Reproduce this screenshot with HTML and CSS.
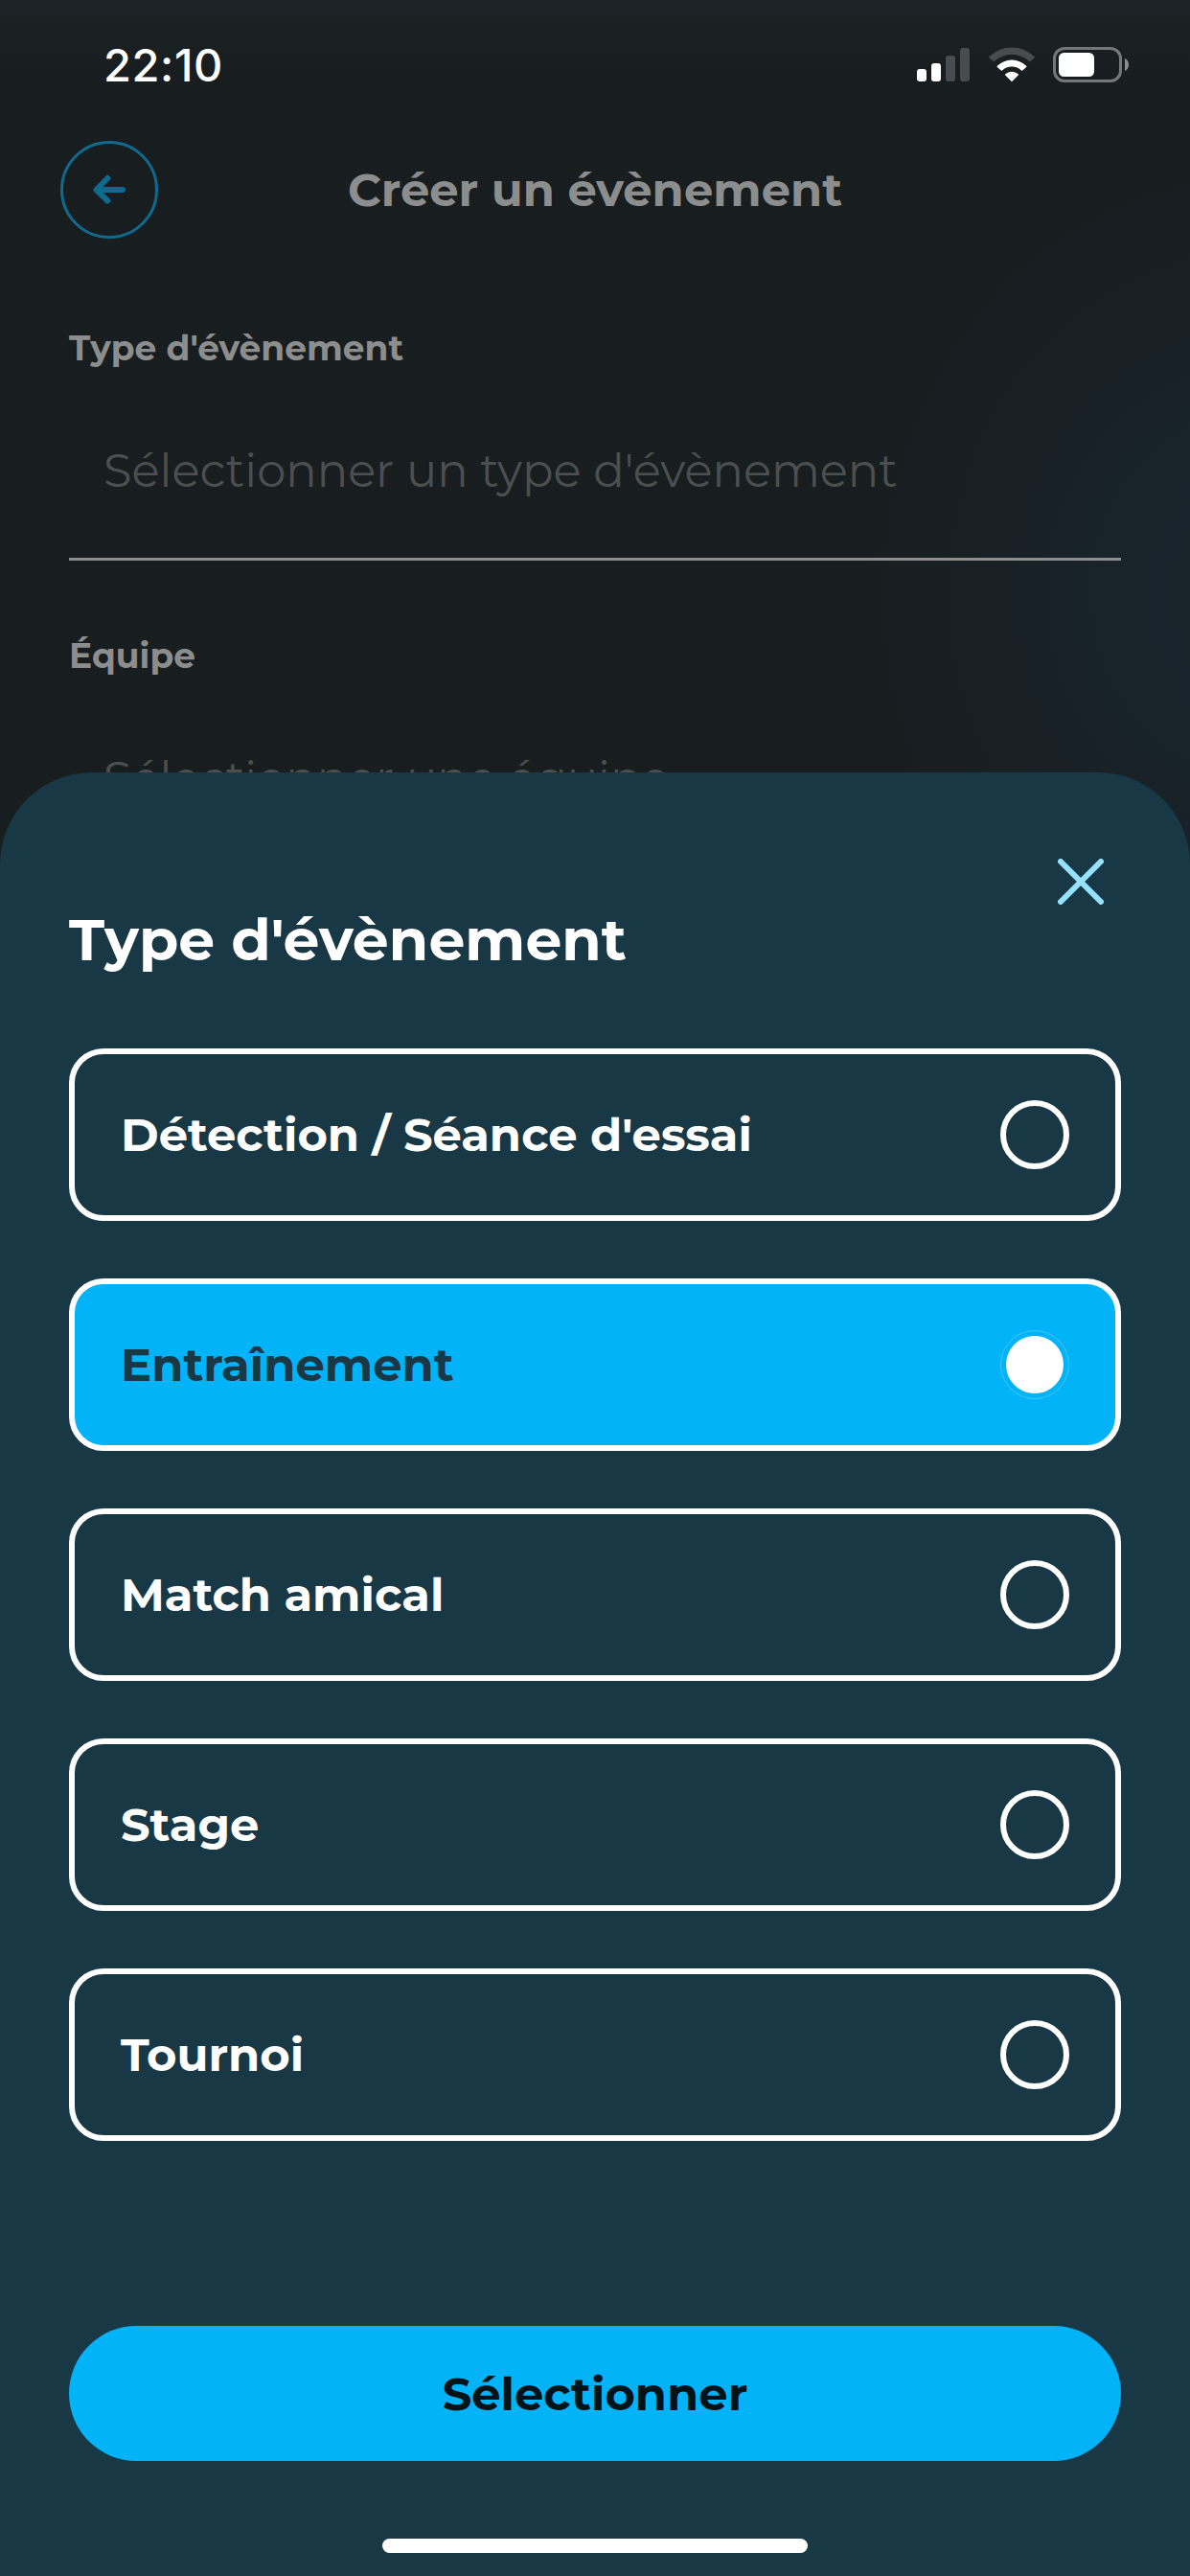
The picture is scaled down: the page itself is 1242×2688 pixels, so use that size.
FILE: index.html
```html
<!DOCTYPE html>
<html lang="fr">
<head>
<meta charset="utf-8">
<title>Créer un évènement</title>
<link rel="stylesheet" href="styles.css">
</head>
<body>
<div class="screen">
  <header class="status">
    <span class="clock">22:10</span>
    <div class="indicators">
      <svg class="signal" width="55" height="36" viewBox="0 0 55 36" fill="#fff">
        <rect x="0" y="22" width="10" height="13" rx="3"/>
        <rect x="15" y="16" width="10" height="19" rx="3"/>
        <rect x="30" y="8" width="10" height="27" rx="3" fill="#484c4e"/>
        <rect x="45" y="0" width="10" height="35" rx="3" fill="#484c4e"/>
      </svg>
      <svg class="wifi" width="48" height="37" viewBox="0 0 48 37">
        <path d="M.6 11.4A.8.8 0 0 1 .6 10.100A33.600 33.600 0 0 1 47.400 10.100A.8.8 0 0 1 47.400 11.400L43.300 15.100A.8.8 0 0 1 42.200 15.100A26.400 26.400 0 0 0 5.800 15.100A.8.8 0 0 1 4.700 15.100Z" fill="#484c4e"/>
        <path d="M8.800 19.800A21.700 21.700 0 0 1 39.200 19.800A.9.9 0 0 1 39.200 21L35.200 24.600A.9.9 0 0 1 34 24.600A14.500 14.500 0 0 0 14 24.600A.9.9 0 0 1 12.800 24.600L8.800 21A.9.9 0 0 1 8.800 19.800Z" fill="#fff"/>
        <path d="M17.300 28.300A10 10 0 0 1 30.700 28.300A.9.9 0 0 1 30.700 29.500L24.600 35.700A.9.9 0 0 1 23.400 35.700L17.300 29.500A.9.9 0 0 1 17.300 28.300Z" fill="#fff"/>
      </svg>
      <svg class="battery" width="80" height="37" viewBox="0 0 80 37">
        <rect x="1.500" y="1.500" width="69" height="34" rx="10.500" fill="none" stroke="#75787a" stroke-width="3"/>
        <rect x="6" y="6" width="37" height="25" rx="5.500" fill="#fff"/>
        <path d="M75 12C80.300 14 80.300 23 75 25Z" fill="#8b8e8f"/>
      </svg>
    </div>
  </header>

  <nav class="topbar">
    <button class="back" aria-label="Retour">
      <svg width="34" height="32" viewBox="0 0 34 32" fill="none" stroke="#0f6a8e" stroke-width="6" stroke-linecap="round" stroke-linejoin="round">
        <path d="M15.300 4L3.500 16L15.300 27.500M4 16H31"/>
      </svg>
    </button>
    <h1 class="page-title">Créer un évènement</h1>
  </nav>

  <main class="form">
    <div class="group">
      <div class="label">Type d'évènement</div>
      <div class="field">Sélectionner un type d'évènement</div>
    </div>
    <div class="group">
      <div class="label">Équipe</div>
      <div class="field">Sélectionner une équipe</div>
    </div>
  </main>

  <section class="sheet">
    <button class="close" aria-label="Fermer">
      <svg width="48" height="48" viewBox="0 0 48 48" fill="none" stroke="#98e1fd" stroke-width="6" stroke-linecap="round">
        <path d="M3 3L45 45M45 3L3 45"/>
      </svg>
    </button>
    <h2 class="sheet-title">Type d'évènement</h2>
    <div class="options">
      <div class="option"><span>Détection / Séance d'essai</span><i class="radio"></i></div>
      <div class="option selected"><span>Entraînement</span><i class="radio"></i></div>
      <div class="option"><span>Match amical</span><i class="radio"></i></div>
      <div class="option"><span>Stage</span><i class="radio"></i></div>
      <div class="option"><span>Tournoi</span><i class="radio"></i></div>
    </div>
    <button class="submit">Sélectionner</button>
    <div class="home"></div>
  </section>
</div>
</body>
</html>
```

FILE: styles.css
```css
* { box-sizing: border-box; margin: 0; padding: 0; }

body { background: #181d1f; }

button { border: 0; background: none; font: inherit; }

svg { display: block; }

.screen {
  position: relative;
  width: 1242px;
  height: 2688px;
  overflow: hidden;
  font-family: Montserrat, Inter, "Open Sans", sans-serif;
  background:
    radial-gradient(ellipse 420px 480px at 1300px 620px, #16252b 0%, #18232a 35%, rgba(24, 29, 31, 0) 100%),
    linear-gradient(180deg, #1d2326 0, #181d1f 80px);
  background-color: #181d1f;
}

.status {
  display: flex;
  justify-content: space-between;
  height: 147px;
  padding: 49px 63px 0 108px;
}

.clock {
  height: 38px;
  font: 550 47px/38px Inter, "Liberation Sans", sans-serif;
  letter-spacing: 0.6px;
  color: #fff;
}

.indicators { display: flex; height: 37px; }
.signal { margin-top: 1px; }
.wifi { margin-left: 20px; }
.battery { margin-left: 19px; }

.topbar {
  display: grid;
  grid-template-columns: 102px 1fr 102px;
  align-items: center;
  height: 102px;
  padding: 0 63px;
}

.back {
  display: flex;
  align-items: center;
  justify-content: center;
  width: 102px;
  height: 102px;
  border: 3px solid #0f6a8e;
  border-radius: 50%;
}

.page-title {
  font-size: 48px;
  font-weight: 700;
  line-height: 58px;
  text-align: center;
  color: #8c8d8d;
}

.form {
  display: flex;
  flex-direction: column;
  gap: 77px;
  padding: 92px 72px 0;
}

.label {
  font-size: 36px;
  font-weight: 700;
  line-height: 44px;
  color: #8c8d8d;
}

.field {
  height: 200px;
  padding: 77px 36px 0;
  border-bottom: 3px solid #8c8d8c;
  font-size: 48px;
  font-weight: 400;
  line-height: 58px;
  color: #4c4f50;
}

/* Bottom sheet laid over the form */
.sheet {
  position: absolute;
  inset: 806px 0 0;
  display: flex;
  flex-direction: column;
  padding: 90px 72px 0;
  border-radius: 96px 96px 0 0;
  background: #193845;
}

.close { align-self: flex-end; margin-right: 18px; height: 48px; }

.sheet-title {
  font-size: 60px;
  font-weight: 700;
  line-height: 73px;
  color: #fff;
}

.options {
  display: flex;
  flex-direction: column;
  gap: 60px;
  margin-top: 77px;
}

.option {
  display: flex;
  align-items: center;
  justify-content: space-between;
  height: 180px;
  padding: 0 48px;
  border: 6px solid #fff;
  border-radius: 36px;
  font-size: 48px;
  font-weight: 700;
  line-height: 58px;
  color: #fff;
}

.radio {
  width: 72px;
  height: 72px;
  border: 6px solid #fff;
  border-radius: 50%;
}

.selected { background: #02b3f8; color: #193845; }

.selected .radio {
  border-color: #02b3f8;
  background: #fff;
  outline: 1px solid rgba(255, 255, 255, 0.25);
  outline-offset: -1px;
}

.submit {
  height: 141px;
  margin-top: 193px;
  border-radius: 71px;
  background: #02b3f8;
  font-size: 48px;
  font-weight: 700;
  line-height: 58px;
  color: #001318;
}

.home {
  align-self: center;
  width: 444px;
  height: 15px;
  margin-top: 81px;
  border-radius: 8px;
  background: #fff;
}
```
